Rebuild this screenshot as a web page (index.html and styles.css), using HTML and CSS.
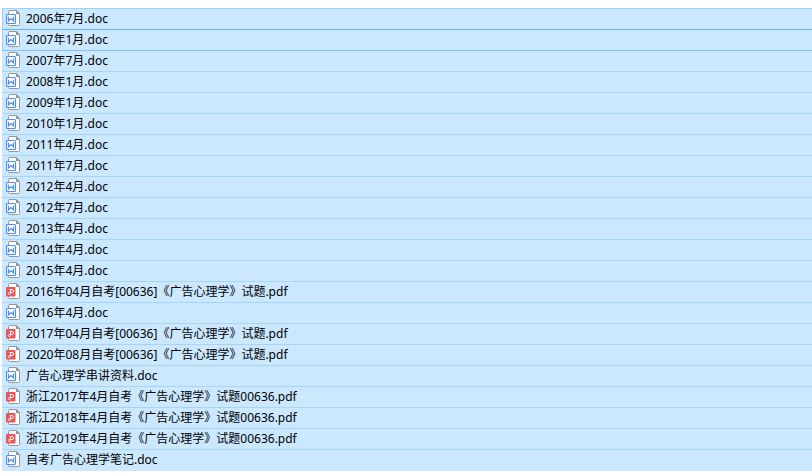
FILE: index.html
```html
<!DOCTYPE html>
<html lang="zh-CN">
<head>
    <meta charset="UTF-8">
    <title>广告心理学</title>
    <link rel="stylesheet" href="styles.css">
</head>
<body>
    <svg class="sprite" aria-hidden="true">
        <symbol id="doc" viewBox="0 0 14 16">
            <path d="M4 .5H10.5L13.5 3.5V14.5Q13.5 15.5 12.5 15.5H3.5Q2.500 15.5 2.500 14.5V1.5Q2.500 .5 4 .5Z" fill="#fff" stroke="#92979d"/>
            <path d="M10 0L14 4H10Z" fill="#92979d"/>
            <rect x=".5" y="4.5" width="9" height="9" rx="1" fill="#fff" stroke="#4f8df5" stroke-width="1.200"/>
            <path d="M2.500 6.800V10.800L5 8.600 7.500 10.800V6.800" fill="none" stroke="#4f8df5" stroke-width="1.200"/>
        </symbol>
        <symbol id="pdf" viewBox="0 0 14 16">
            <path d="M4 .5H10.5L13.5 3.5V14.5Q13.5 15.5 12.5 15.5H3.5Q2.500 15.5 2.500 14.5V1.5Q2.500 .5 4 .5Z" fill="#fff" stroke="#92979d"/>
            <path d="M10 0L14 4H10Z" fill="#92979d"/>
            <rect x="0" y="4" width="9.5" height="9.5" rx="1" fill="#ea5558"/>
            <path d="M3.5 6.5H6Q7.500 6.5 7.500 8T6 9.500H3.5Q2.300 9.500 2.300 10.500T3.400 11.500 4.500 10.500V6.5" fill="none" stroke="#fff" stroke-width=".9"/>
        </symbol>
    </svg>

    <ul class="file-list">
        <li class="file focused"><svg class="icon"><use href="#doc"/></svg><span>2006年7月.doc</span></li>
        <li class="file hovered"><svg class="icon"><use href="#doc"/></svg><span>2007年1月.doc</span></li>
        <li class="file"><svg class="icon"><use href="#doc"/></svg><span>2007年7月.doc</span></li>
        <li class="file"><svg class="icon"><use href="#doc"/></svg><span>2008年1月.doc</span></li>
        <li class="file"><svg class="icon"><use href="#doc"/></svg><span>2009年1月.doc</span></li>
        <li class="file"><svg class="icon"><use href="#doc"/></svg><span>2010年1月.doc</span></li>
        <li class="file"><svg class="icon"><use href="#doc"/></svg><span>2011年4月.doc</span></li>
        <li class="file"><svg class="icon"><use href="#doc"/></svg><span>2011年7月.doc</span></li>
        <li class="file"><svg class="icon"><use href="#doc"/></svg><span>2012年4月.doc</span></li>
        <li class="file"><svg class="icon"><use href="#doc"/></svg><span>2012年7月.doc</span></li>
        <li class="file"><svg class="icon"><use href="#doc"/></svg><span>2013年4月.doc</span></li>
        <li class="file"><svg class="icon"><use href="#doc"/></svg><span>2014年4月.doc</span></li>
        <li class="file"><svg class="icon"><use href="#doc"/></svg><span>2015年4月.doc</span></li>
        <li class="file"><svg class="icon"><use href="#pdf"/></svg><span>2016年04月自考[00636]《广告心理学》试题.pdf</span></li>
        <li class="file"><svg class="icon"><use href="#doc"/></svg><span>2016年4月.doc</span></li>
        <li class="file"><svg class="icon"><use href="#pdf"/></svg><span>2017年04月自考[00636]《广告心理学》试题.pdf</span></li>
        <li class="file"><svg class="icon"><use href="#pdf"/></svg><span>2020年08月自考[00636]《广告心理学》试题.pdf</span></li>
        <li class="file"><svg class="icon"><use href="#doc"/></svg><span>广告心理学串讲资料.doc</span></li>
        <li class="file"><svg class="icon"><use href="#pdf"/></svg><span>浙江2017年4月自考《广告心理学》试题00636.pdf</span></li>
        <li class="file"><svg class="icon"><use href="#pdf"/></svg><span>浙江2018年4月自考《广告心理学》试题00636.pdf</span></li>
        <li class="file"><svg class="icon"><use href="#pdf"/></svg><span>浙江2019年4月自考《广告心理学》试题00636.pdf</span></li>
        <li class="file"><svg class="icon"><use href="#doc"/></svg><span>自考广告心理学笔记.doc</span></li>
    </ul>
</body>
</html>
```
FILE: styles.css
```css
* {
    box-sizing: border-box;
}

body {
    margin: 0;
    background: #fff;
    color: #000;
    font-family: "Noto Sans", "Noto Sans CJK SC", sans-serif;
    font-size: 12px;
    line-height: 20px;
}

.sprite {
    display: none;
}

.file-list {
    list-style: none;
    margin: 8px 0 0 2px;
    padding: 0;
    border-bottom: 1px solid #cce8ff;
}

.file {
    display: flex;
    align-items: flex-start;
    gap: 6px;
    height: 21px;
    padding-left: 4px;
    border-top: 1px solid #a6d5fa;
    background: #cce8ff;
    white-space: nowrap;
}

/* the first two rows carry the selection outline */
.focused,
.hovered {
    padding-left: 3px;
    border-left: 1px solid #99d1ff;
}
.focused {
    border-top-color: #99d1ff;
}
.hovered {
    border-top-color: #66b5f4;
}
.hovered + .file {
    border-top-color: #7cc3fb;
}

.icon {
    flex: none;
    width: 14px;
    height: 16px;
    margin-top: 1px;
}
```
